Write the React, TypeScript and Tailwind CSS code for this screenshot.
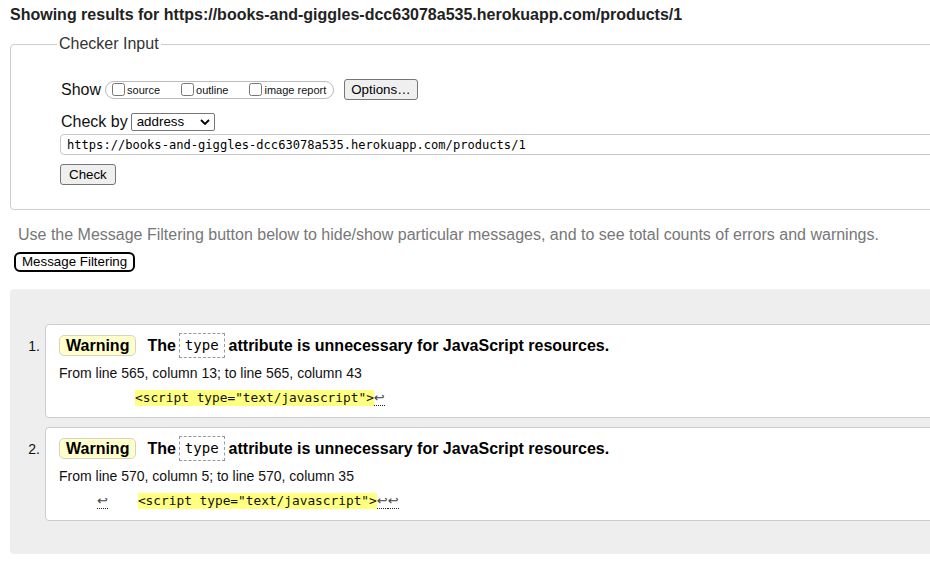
const sans = "font-['Liberation_Sans',Arial,sans-serif]"

function Checkbox({ label }: { label: string }) {
  return (
    <label className="flex items-center">
      <input type="checkbox" className="m-0 h-[13px] w-[13px]" />
      <span className="ml-[2px] text-[11px] leading-[13px] pt-[2px]">{label}</span>
    </label>
  )
}

function Ret() {
  return (
    <span className="inline-block border-b border-dotted border-[#222] font-['DejaVu_Sans',sans-serif] text-[13px] leading-[15px] text-[#444]">
      ↩
    </span>
  )
}

function Hl({ children }: { children: React.ReactNode }) {
  return (
    <span className="inline-block h-[16px] bg-[#ffff80] font-['DejaVu_Sans_Mono',monospace] text-[12.8px] leading-[16px] text-[#111]">
      {children}
    </span>
  )
}

function Message({
  n,
  from,
  extract,
}: {
  n: number
  from: string
  extract: React.ReactNode
}) {
  return (
    <li className="flex">
      <div className="w-[35px] shrink-0 pr-[5px] pt-[14px] text-right text-[14px] leading-[16px]">{n}.</div>
      <div className="h-[94px] flex-1 rounded-l-[4px] border border-[#cccccc] bg-white pl-[13px] pt-[8px]">
        <div className="flex h-[25px] items-center text-[16px] font-bold leading-[18px] text-black">
          <span className="rounded-[5px] border border-[#d4d4c0] bg-[#ffffcc] px-[6px] leading-[19px]">Warning</span>
          <span className="ml-[11px]">The</span>
          <code className="ml-[3px] border border-dashed border-[#999] px-[5px] font-['DejaVu_Sans_Mono',monospace] text-[14px] font-normal leading-[23px]">
            type
          </code>
          <span className="ml-[4px]">attribute is unnecessary for JavaScript resources.</span>
        </div>
        <div className="mt-[7px] text-[14px] leading-[16px] text-[#111]">{from}</div>
        <div className="mt-[9px] flex h-[18px] items-start">{extract}</div>
      </div>
    </li>
  )
}

export default function App() {
  return (
    <div className={`h-[569px] w-[930px] overflow-hidden bg-white text-[#111] ${sans}`}>
      <div className="w-[1000px]">
        <h2 className="ml-[10px] pt-[6px] text-[16px] font-bold leading-[18px] text-[#222]">
          Showing results for https://books-and-giggles-dcc63078a535.herokuapp.com/products/1
        </h2>

        <fieldset className="ml-[10px] mt-[11px] rounded-l-[4px] border border-[#cccccc] pb-[23px] pl-[49px]">
          <legend className="-ml-[3px] px-[2px] text-[16px] leading-[18px] text-[#333]">Checker Input</legend>

          <div className="mt-[26px] flex h-[21px] items-center">
            <span className="ml-[1px] text-[16px] leading-[18px]">Show</span>
            <div className="ml-[4px] flex h-[18px] items-center gap-[21px] rounded-[9px] border border-[#bbbbbb] pl-[6px] pr-[7px]">
              <Checkbox label="source" />
              <Checkbox label="outline" />
              <Checkbox label="image report" />
            </div>
            <button className="ml-[10px] h-[21px] rounded-[3px] border border-[#767676] bg-[#efefef] px-[6px] text-[13.33px] leading-[19px] text-black">
              Options…
            </button>
          </div>

          <div className="mt-[12px] flex h-[20px] items-center">
            <span className="ml-[1px] text-[16px] leading-[18px]">Check by</span>
            <div className="ml-[3px] flex h-[18px] w-[84px] items-center justify-between rounded-[2px] border border-[#767676] pl-[5px] pr-[4px] text-[13.33px] text-black">
              <span>address</span>
              <svg width="10" height="6" viewBox="0 0 10 6" fill="none">
                <path d="M1 1l4 4 4-4" stroke="#000" strokeWidth="1.8" />
              </svg>
            </div>
          </div>

          <div className="mt-[2px] flex h-[21px] items-center rounded-l-[4px] border border-[#c8c8c8] pl-[6px] pt-[2px] font-['DejaVu_Sans_Mono',monospace] text-[12.1px] text-black">
            https://books-and-giggles-dcc63078a535.herokuapp.com/products/1
          </div>

          <button className="mt-[9px] h-[21px] rounded-[3px] border border-[#767676] bg-[#efefef] px-[8px] text-[13.33px] leading-[19px] text-black">
            Check
          </button>
        </fieldset>

        <p className="ml-[18px] mt-[16px] text-[16px] leading-[18px] text-[#777]">
          Use the Message Filtering button below to hide/show particular messages, and to see total counts of errors and warnings.
        </p>

        <button className="ml-[14px] mt-[8px] h-[20px] rounded-[6px] border-2 border-black bg-white px-[6px] text-[13.33px] leading-[16px] text-black">
          Message Filtering
        </button>

        <ol className="ml-[10px] mt-[16px] flex flex-col gap-[9px] rounded-l-[4px] bg-[#eeeeee] pb-[33px] pt-[35px]">
          <Message
            n={1}
            from="From line 565, column 13; to line 565, column 43"
            extract={
              <>
                <span className="ml-[76px]" />
                <Hl>{'<script type="text/javascript">'}</Hl>
                <Ret />
              </>
            }
          />
          <Message
            n={2}
            from="From line 570, column 5; to line 570, column 35"
            extract={
              <>
                <span className="ml-[38px]" />
                <Ret />
                <span className="ml-[30px]" />
                <Hl>{'<script type="text/javascript">'}</Hl>
                <Ret />
                <Ret />
              </>
            }
          />
        </ol>
      </div>
    </div>
  )
}
